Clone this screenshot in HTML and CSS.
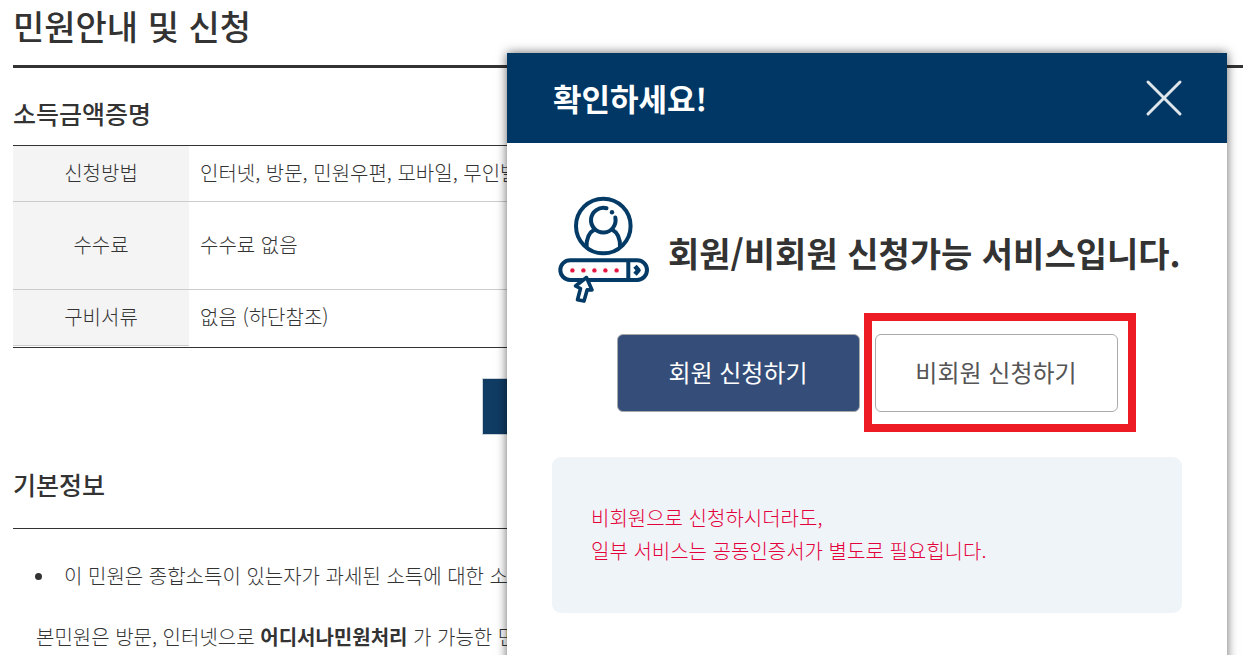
FILE: index.html
```html
<!DOCTYPE html>
<html lang="ko">
<head>
<meta charset="utf-8">
<title>민원안내 및 신청</title>
<link rel="stylesheet" href="styles.css">
</head>
<body>
<main class="page">
  <h1 class="page-title">민원안내 및 신청</h1>
  <section class="section">
    <h2 class="section-title">소득금액증명</h2>
    <table class="info">
      <tr><th scope="row">신청방법</th><td>인터넷, 방문, 민원우편, 모바일, 무인발급기</td></tr>
      <tr class="tall"><th scope="row">수수료</th><td>수수료 없음</td></tr>
      <tr><th scope="row">구비서류</th><td>없음 (하단참조)</td></tr>
    </table>
    <div class="actions"><button class="apply" type="button" aria-label="신청하기"></button></div>
  </section>
  <section class="section">
    <h2 class="section-title basic">기본정보</h2>
    <ul class="summary">
      <li>이 민원은 종합소득이 있는자가 과세된 소득에 대한 소득금액</li>
    </ul>
    <p class="detail">본민원은 방문, 인터넷으로 <strong>어디서나민원처리</strong> 가 가능한 민원</p>
  </section>
</main>

<div class="modal" role="dialog" aria-labelledby="modal-title">
  <header class="modal-head">
    <h2 class="modal-title" id="modal-title">확인하세요!</h2>
    <button class="close" type="button" aria-label="닫기">
      <svg width="38" height="38" viewBox="0 0 38 38" fill="none" stroke="#dfe6eb" stroke-width="3" stroke-linecap="round"><path d="M3 3 35 35M35 3 3 35"/></svg>
    </button>
  </header>
  <div class="modal-body">
    <div class="message">
      <svg class="member-icon" width="94" height="110" viewBox="0 0 94 110" fill="none" stroke="#043b66" stroke-width="4" stroke-linejoin="round">
        <circle cx="46.300" cy="31" r="27.300"/>
        <path d="M49.500 13.300A12.300 12.300 0 1 0 58.300 22.500" stroke-linecap="round"/>
        <circle cx="55" cy="17.300" r="2.200" fill="#043b66" stroke="none"/>
        <path d="M37.500 34.500Q29.200 39 29.600 52M55 34.500Q63.400 39 63 52"/>
        <rect x="3.300" y="65.300" width="86.700" height="19.600" rx="9.800"/>
        <path d="M71.300 65v20"/>
        <path d="m78 71.300 3.500 4-3.500 4" stroke-width="4.500"/>
        <g fill="#e51641" stroke="none"><circle cx="15.400" cy="75.400" r="2.200"/><circle cx="26.400" cy="75.400" r="2.200"/><circle cx="37.400" cy="75.400" r="2.200"/><circle cx="48.400" cy="75.400" r="2.200"/><circle cx="59.600" cy="75.400" r="2.200"/></g>
        <path d="m29.500 82.500-11 8.500 5 2.500-3 11.300 6.500 1.300 3.200-11.300 4.800.200Z" stroke-width="3.600" fill="#fff"/>
      </svg>
      <p class="message-text">회원/비회원 신청가능 서비스입니다.</p>
    </div>
    <div class="choices">
      <button class="choice member" type="button">회원 신청하기</button>
      <div class="marked"><button class="choice guest" type="button">비회원 신청하기</button></div>
    </div>
    <p class="notice">비회원으로 신청하시더라도,<br>일부 서비스는 공동인증서가 별도로 필요힙니다.</p>
  </div>
</div>
</body>
</html>
```

FILE: styles.css
```css
* { box-sizing: border-box; }

body {
  margin: 0;
  min-height: 100vh;
  position: relative;
  overflow: hidden;
  background: #fff;
  color: #333;
  font-family: "Noto Sans CJK KR", "Noto Sans", sans-serif;
  font-size: 20px;
  font-weight: 300;
  line-height: 32px;
}

h1, h2, p, ul { margin: 0; padding: 0; }
button { font: inherit; padding: 0; cursor: pointer; }

.page { padding-left: 13px; white-space: nowrap; }
.section { padding-right: 30px; }

.page-title {
  height: 68px;
  border-bottom: 3px solid #333;
  font-size: 34px;
  font-weight: 500;
  line-height: 52px;
}

.section-title {
  padding-top: 26px;
  font-size: 25px;
  font-weight: 500;
  line-height: 38px;
}

.info {
  width: 100%;
  margin-top: 13px;
  border-collapse: separate;
  border-spacing: 0;
  border-top: 1px solid #333;
  border-bottom: 1px solid #333;
  padding-bottom: 1px;
}
.info th, .info td {
  height: 56px;
  padding: 0 11px 2px;
  border-bottom: 1px solid #ccc;
  font-weight: 300;
  text-align: left;
}
.info th { width: 176px; background: #f4f4f4; text-align: center; }
.info .tall th, .info .tall td { height: 88px; }
.info tr:last-child td { border-bottom-color: transparent; }

.actions { display: flex; justify-content: center; margin-top: 30px; }
.apply {
  width: 262px;
  height: 57px;
  border: 1px solid #ccd3d9;
  background: #103b63;
}

.section-title.basic { padding-bottom: 25px; border-bottom: 1px solid #333; padding-top: 30px; }
.summary { margin-top: 31px; padding-left: 22px; list-style: none; }
.summary li { display: flex; align-items: center; gap: 22px; }
.summary li::before {
  content: "";
  width: 7px;
  height: 7px;
  border-radius: 50%;
  background: #333;
}
.detail { margin-top: 29px; padding-left: 23px; }
.detail strong { font-weight: 700; }

.modal {
  position: absolute;
  top: 53px;
  right: 16px;
  bottom: -20px;
  width: 720px;
  background: #fff;
  box-shadow: 0 0 10px rgba(0, 0, 0, 0.6);
}
.modal-head {
  display: flex;
  align-items: center;
  justify-content: space-between;
  height: 90px;
  padding: 0 44px 0 46px;
  background: #003764;
  color: #fff;
}
.modal-title { font-size: 31px; font-weight: 700; line-height: 46px; }
.close { display: flex; border: 0; background: none; }

.modal-body { padding: 52px 45px 0; }
.message { display: flex; align-items: center; gap: 17px; padding-left: 5px; }
.member-icon { flex: none; }
.message-text {
  padding-top: 6px;
  font-size: 34px;
  font-weight: 700;
  line-height: 50px;
  white-space: nowrap;
}

.choices { display: flex; justify-content: center; gap: 15px; margin-top: 29px; }
.choice {
  width: 243px;
  height: 78px;
  padding-bottom: 2px;
  border: 1px solid #aaa;
  border-radius: 6px;
  font-size: 24px;
  font-weight: 400;
}
.member { background: #344d79; color: #fff; }
.guest { background: #fff; color: #555; }
.marked { position: relative; }
.marked::after {
  content: "";
  position: absolute;
  inset: -21px -18px -20px -11px;
  border: 8px solid #ed1c24;
  pointer-events: none;
}

.notice {
  margin-top: 45px;
  padding: 44px 39px 46px;
  border-radius: 9px;
  background: #eff4f9;
  color: #e4003a;
  line-height: 33px;
}
```
